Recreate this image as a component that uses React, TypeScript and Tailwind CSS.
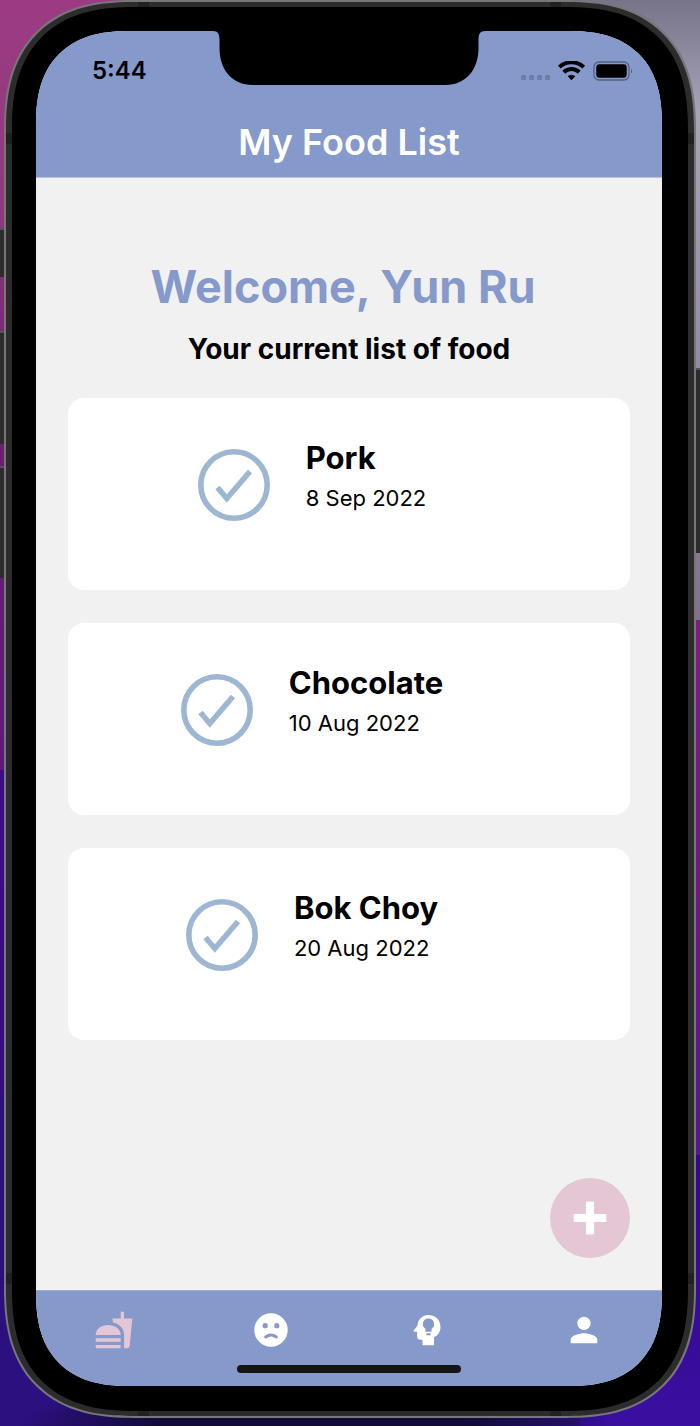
import { LuPlus } from "react-icons/lu";
import { MdFastfood, MdPerson } from "react-icons/md";

const foods = [
  { name: "Pork", date: "8 Sep 2022" },
  { name: "Chocolate", date: "10 Aug 2022" },
  { name: "Bok Choy", date: "20 Aug 2022" },
];

function StatusBar() {
  return (
    <div className="flex justify-between pr-[29px] pl-[56px]">
      <span className="text-2xl leading-7 font-semibold text-black">5:44</span>
      <div className="flex h-7 items-center gap-2">
        <div className="flex gap-[3px] pt-3">
          <i className="size-[5px] rounded-[1px] bg-[#6b7da9]" />
          <i className="size-[5px] rounded-[1px] bg-[#6b7da9]" />
          <i className="size-[5px] rounded-[1px] bg-[#6b7da9]" />
          <i className="size-[5px] rounded-[1px] bg-[#6b7da9]" />
        </div>
        <svg viewBox="0 0 27 20" className="h-5 w-[27px]" aria-label="Wi-Fi">
          <path d="M1.300 6.100a17.800 17.800 0 0 1 24.400 0" fill="none" stroke="#000" strokeWidth="4" />
          <path d="M5.800 11.200a11 11 0 0 1 15.400 0" fill="none" stroke="#000" strokeWidth="4" />
          <path d="M9.700 15.300a5.500 5.500 0 0 1 7.600 0l-3.800 3.900z" />
        </svg>
        <svg viewBox="0 0 40 20" className="h-5 w-10" aria-label="Battery">
          <rect x="1" y="1" width="35" height="18" rx="5" fill="none" stroke="#54627f" strokeWidth="1.300" />
          <rect x="3.300" y="3.300" width="30.400" height="13.400" rx="3" />
          <path d="M38 7.500q2.200 2.500 0 5z" fill="#54627f" />
        </svg>
      </div>
    </div>
  );
}

function Notch() {
  return (
    <svg viewBox="0 0 272 54" className="absolute inset-x-0 top-0 mx-auto h-[54px] w-[272px]">
      <path d="M0 0c5 0 6.500 3 6.500 9v8c0 22 13 37 33 37h193c20 0 33-15 33-37V9c0-6 1.500-9 6.500-9z" />
    </svg>
  );
}

function CheckIcon() {
  return (
    <svg viewBox="0 0 72 72" className="size-[72px]" fill="none" stroke="#9db7d3">
      <circle cx="36" cy="36" r="33.200" strokeWidth="5.600" />
      <path d="M19.500 38.500l9.300 11L52 22.500" strokeWidth="5.600" />
    </svg>
  );
}

function FoodCard({ name, date }: { name: string; date: string }) {
  return (
    <li className="flex h-48 justify-center gap-9 rounded-2xl bg-white pt-[42px] pr-[74px]">
      <button aria-label={`Mark ${name} as done`} className="flex items-start pt-[9px]">
        <CheckIcon />
      </button>
      <div className="flex flex-col gap-2">
        <h3 className="text-[31px] leading-9 font-bold">{name}</h3>
        <p className="text-[22px] leading-7">{date}</p>
      </div>
    </li>
  );
}

function SadFace() {
  return (
    <svg viewBox="0 0 34 34" className="size-[34px]" fill="currentColor">
      <circle cx="17" cy="17" r="16.700" />
      <circle cx="11.200" cy="12.700" r="2.600" fill="#8699cb" />
      <circle cx="22.800" cy="12.700" r="2.600" fill="#8699cb" />
      <path d="M11.700 24q5.300-4 10.600 0" fill="none" stroke="#8699cb" strokeWidth="3" strokeLinecap="round" />
    </svg>
  );
}

function HeadBulb() {
  return (
    <svg viewBox="0 0 24 24" className="size-9" fill="currentColor">
      <path
        fillRule="evenodd"
        d="M13 2C9 2 5.900 5 5.700 9L3.100 12.400c-.2.300 0 .7.400.7h1.900v3.200c0 1.300.9 2.200 2.200 2.200H9v3.700h7.700v-5.300c2.700-1.300 4.300-3.900 4.300-6.900C21 5.300 17.600 2 13 2zM13 4.300a3.800 3.800 0 0 0-2 7v1.900h4v-1.900a3.800 3.800 0 0 0-2-7zM11.600 14.200v1.300h2.800v-1.300z"
      />
    </svg>
  );
}

const tabs = [
  { label: "Food", icon: <MdFastfood className="size-10" />, active: true },
  { label: "Waste", icon: <SadFace />, active: false },
  { label: "Ideas", icon: <HeadBulb />, active: false },
  { label: "Profile", icon: <MdPerson className="size-10" />, active: false },
];

function TabBar() {
  return (
    <nav className="flex flex-col items-center border-t border-[#a3aece] bg-[#8699cb] pb-[13px]">
      <div className="grid w-full grid-cols-4 pb-0.5">
        {tabs.map((tab) => (
          <button
            key={tab.label}
            aria-label={tab.label}
            className={`flex h-[72px] items-center justify-center pt-1.5 ${tab.active ? "text-[#e4c6d5]" : "text-white"}`}
          >
            {tab.icon}
          </button>
        ))}
      </div>
      <div className="h-2 w-56 rounded-full bg-[#151515]" />
    </nav>
  );
}

function Phone() {
  return (
    // the two gradients are the antenna bands in the metal frame
    <div className="min-w-0 flex-1 rounded-[108px] border-2 border-[#77777a] bg-[#2c2c2c] bg-[linear-gradient(#0000_131px,#212121_131px_142px,#0000_142px_calc(100%-143px),#212121_calc(100%-143px)_calc(100%-132px),#0000_0),linear-gradient(to_right,#0000_132px,#212121_132px_143px,#0000_143px_calc(100%-144px),#212121_calc(100%-144px)_calc(100%-133px),#0000_0)] px-1.5 py-[5px] supports-[corner-shape:squircle]:rounded-[130px] supports-[corner-shape:squircle]:[corner-shape:superellipse(1.3)]">
      <div className="rounded-[102px] bg-black pt-6 pr-[26px] pb-[25px] pl-6 supports-[corner-shape:squircle]:rounded-[122px] supports-[corner-shape:squircle]:[corner-shape:superellipse(1.3)]">
        <div className="relative overflow-hidden rounded-[78px] bg-[#f1f1f1] supports-[corner-shape:squircle]:rounded-[94px] supports-[corner-shape:squircle]:[corner-shape:superellipse(1.3)]">
          <header className="flex flex-col gap-[35px] border-b border-[#b9c3de] bg-[#8699cb] pt-[26px] pb-[13px]">
            <StatusBar />
            <h1 className="text-center text-4xl leading-[44px] font-semibold text-white">My Food List</h1>
          </header>
          <Notch />

          <main className="relative flex min-h-[1112px] flex-col gap-[31px] px-8 pt-[81px]">
            <div className="flex flex-col gap-4 text-center">
              <h2 className="pr-3 text-[45px] leading-[56px] font-bold text-[#8699cb]">Welcome, Yun Ru</h2>
              <p className="text-[28px] leading-9 font-bold">Your current list of food</p>
            </div>
            <ul className="grid gap-[33px]">
              {foods.map((food) => (
                <FoodCard key={food.name} {...food} />
              ))}
            </ul>
            <button
              aria-label="Add food"
              className="absolute right-8 bottom-8 flex size-20 items-center justify-center rounded-full bg-[#e4c6d5] text-white"
            >
              <LuPlus className="size-14" strokeWidth={3.5} strokeLinecap="butt" />
            </button>
          </main>
          <TabBar />
        </div>
      </div>
    </div>
  );
}

export default function App() {
  return (
    <div className="bg-[linear-gradient(#9c3b84,#8f3a7c_14%,#6b2070_30%,#5c1a78_54%,#3c0c88_54%,#350c80_77%,#2a1078_77%,#2c1080)] font-[Inter,'Liberation_Sans',sans-serif] text-black">
      <div className="flex bg-[radial-gradient(300px_50px_at_45%_100%,#120a38_50%,#0000),linear-gradient(#77748a,#a8a3b8_8%,#84708c_43.500%,#841a80_43.500%,#5a148c_81%,#34088c_81%,#3a0ea0)] bg-[length:100%_100%,120px_100%] bg-right-top bg-no-repeat pb-2">
        {/* mute switch and volume keys */}
        <div className="flex w-1 flex-col pt-[228px]">
          <div className="mb-[54px] h-[49px] border-t-2 border-[#55505a] bg-[#2c2c2c]" />
          <div className="mb-[22px] h-[113px] border-t-2 border-[#55505a] bg-[#2c2c2c]" />
          <div className="h-[112px] border-t-2 border-[#55505a] bg-[#2c2c2c]" />
        </div>
        <Phone />
        {/* power key */}
        <div className="flex w-1 flex-col pt-[368px]">
          <div className="h-[185px] border-t-2 border-[#55505a] bg-[#2c2c2c]" />
        </div>
      </div>
    </div>
  );
}
